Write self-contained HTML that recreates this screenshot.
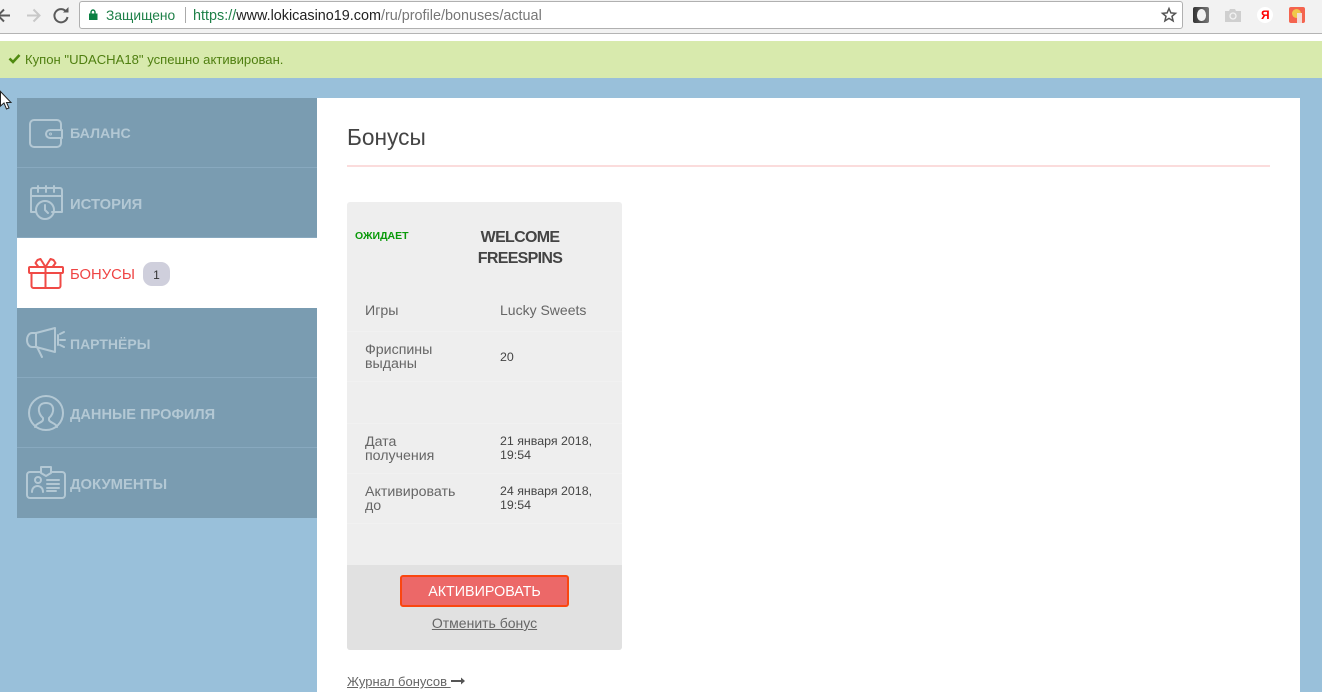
<!DOCTYPE html>
<html lang="ru"><head><meta charset="utf-8"><title>Бонусы</title>
<style>
html,body{margin:0;padding:0}
body{position:relative;width:1322px;height:692px;overflow:hidden;background:#99c0da;font-family:"Liberation Sans","Noto Sans CJK SC",sans-serif;color:#555}
.a{position:absolute;white-space:nowrap}
svg{position:absolute;overflow:visible}
.nav{position:absolute;left:17px;width:300px;height:70px;background:#7a9cb1;border-bottom:1px solid #88a9bf;box-sizing:border-box}
.nl{position:absolute;left:70px;font-size:14.4px;font-weight:bold;color:#b3c8d4;white-space:nowrap}
.i{fill:none;stroke:#b3c8d4;stroke-width:2;stroke-linecap:round;stroke-linejoin:round}
.lab{position:absolute;left:365px;font-size:14.2px;line-height:14px;color:#666;white-space:nowrap}
.val{position:absolute;left:500px;font-size:12.4px;line-height:14px;color:#444;white-space:nowrap}
.ln{position:absolute;left:347px;width:275px;height:1px;background:#f1f1f1}
</style></head><body>
<div class="a" style="left:0;top:0;width:1322px;height:33px;background:#f2f2f2;border-bottom:1px solid #b4b4b4"></div>
<div class="a" style="left:0;top:34px;width:1322px;height:7px;background:#fff"></div>
<svg style="left:0;top:0" width="80" height="32" fill="none">
<path d="M-2 15.5H10M4 9.5L-2 15.5 4 21.5" stroke="#5a5a5a" stroke-width="2"/>
<path d="M27 15.5H39M33.5 9.5L39.5 15.5 33.5 21.5" stroke="#c8c8c8" stroke-width="2"/>
<path d="M66.5 12A6.6 6.6 0 1 0 67.5 17" stroke="#5a5a5a" stroke-width="2"/>
<path d="M63 12.5h5.5V7z" fill="#5a5a5a"/>
</svg>
<div class="a" style="left:79px;top:1px;width:1102px;height:26px;background:#fff;border:1px solid #b0b0b0;border-radius:3px"></div>
<svg style="left:89px;top:9px" width="10" height="12"><path d="M2 5V3.500a2 2.500 0 0 1 4 0V5" fill="none" stroke="#0b8043" stroke-width="1.4"/><rect x="0" y="4.500" width="8.500" height="6.500" fill="#0b8043"/></svg>
<div class="a" style="left:106px;top:8px;font-size:13.8px;line-height:16px;color:#1e8048">Защищено</div>
<div class="a" style="left:185px;top:7px;width:1px;height:16px;background:#aaa"></div>
<div class="a" style="left:193px;top:8px;font-size:14.4px;line-height:16px;color:#777"><span style="color:#1e8048">https://</span><span style="color:#222">www.lokicasino19.com</span>/ru/profile/bonuses/actual</div>
<svg style="left:1161px;top:7px" width="16" height="16"><path d="M8 1.500l1.900 4.400 4.600.4-3.500 3 1.100 4.600L8 11.400l-4.100 2.500L5 9.300l-3.500-3 4.600-.4z" fill="none" stroke="#555" stroke-width="1.500"/></svg>
<div class="a" style="left:1193px;top:7px;width:16px;height:16px;background:linear-gradient(90deg,#333,#777);border-radius:2px"></div>
<div class="a" style="left:1197px;top:9px;width:9px;height:12px;background:#f2f2f2;border-radius:50% 50% 45% 45%"></div>
<svg style="left:1225px;top:8px" width="16" height="14"><path d="M0 3h4l1-2h5l1 2h5v11H0z" fill="#cfcfcf"/><circle cx="8" cy="8" r="3" fill="none" stroke="#f2f2f2" stroke-width="1.300"/></svg>
<div class="a" style="left:1257px;top:7px;width:16px;height:16px;border-radius:50%;background:#fff"></div>
<div class="a" style="left:1261px;top:8px;font-size:12px;line-height:14px;font-weight:bold;color:#f00">Я</div>
<div class="a" style="left:1289px;top:7px;width:16px;height:16px;background:#f4644f;border-radius:2px"></div>
<div class="a" style="left:1292px;top:9px;width:9px;height:9px;background:#f0c84a;border-radius:50%"></div>
<div class="a" style="left:1297px;top:13px;width:5px;height:10px;background:#f3dcd8"></div>

<div class="a" style="left:0;top:41px;width:1322px;height:37px;background:#d8eaad"></div>
<svg style="left:8px;top:53px" width="13" height="11"><path d="M1.500 5.500L5 9 11.500 2" fill="none" stroke="#4f8a10" stroke-width="2.600"/></svg>
<div class="a" style="left:25px;top:52px;font-size:13.1px;line-height:16px;color:#4f7f10">Купон "UDACHA18" успешно активирован.</div>

<svg style="left:0;top:91px" width="13" height="20"><path d="M.5.5V15l3.500-3 2.500 6 2.500-1-2.500-5.500H11z" fill="#fff" stroke="#222"/></svg>

<div class="a" style="left:317px;top:98px;width:983px;height:594px;background:#fff"></div>

<div class="nav" style="top:98px"></div>
<div class="nav" style="top:168px"></div>
<div class="nav" style="top:238px;background:#fff;border:0"></div>
<div class="nav" style="top:308px"></div>
<div class="nav" style="top:378px"></div>
<div class="nav" style="top:448px;border-bottom-color:#7a9cb1"></div>

<div class="nl" style="top:125px;line-height:18px;font-size:14.2px">БАЛАНС</div>
<div class="nl" style="top:196px;line-height:18px;font-size:14.8px">ИСТОРИЯ</div>
<div class="nl" style="top:266px;line-height:18px;color:#ef4444;font-weight:normal;font-size:14.8px">БОНУСЫ</div>
<div class="a" style="left:143px;top:262px;width:27px;height:24px;border-radius:9px;background:#cfcfdc"></div>
<div class="a" style="left:143px;top:268px;width:27px;text-align:center;font-size:12px;line-height:14px;color:#333">1</div>
<div class="nl" style="top:335px;line-height:18px;font-size:14px">ПАРТНЁРЫ</div>
<div class="nl" style="top:406px;line-height:18px;font-size:14.6px">ДАННЫЕ ПРОФИЛЯ</div>
<div class="nl" style="top:476px;line-height:18px;font-size:14.8px">ДОКУМЕНТЫ</div>

<svg class="i" style="left:0;top:0" width="80" height="520">
<path d="M61 129v-5a4 4 0 0 0-4-4H34a4 4 0 0 0-4 4v19a4 4 0 0 0 4 4h23a4 4 0 0 0 4-4v-5"/>
<path d="M62 130H50a4 4 0 0 0 0 8h12z"/>
<circle cx="50.500" cy="134" r=".5"/>
<path d="M52 212h10V190a2 2 0 0 0-2-2H33a2 2 0 0 0-2 2v22h5M31 196h31M38 186v6M46 186v6M54 186v6"/>
<circle cx="45" cy="210" r="9"/><path d="M45 205v5l3 3"/>
<path d="M36 333l19-5v24l-19-5h-4a5 7 0 0 1 0-14zM36 333v14M37 347l5 10M58 335v10M60 334l4-2M60 340h5M60 345l4 2"/>
<circle cx="46" cy="413" r="17"/>
<path d="M35 427c1-4 7-4 8-7v-2c-6-5-6-15 3-15s9 10 3 15v2c1 3 7 3 8 7"/>
<path d="M41 472H30a3 3 0 0 0-3 3v20a3 3 0 0 0 3 3h32a3 3 0 0 0 3-3v-20a3 3 0 0 0-3-3H51M41 467h10v6l-5 3-5-3z"/>
<circle cx="38" cy="480" r="3"/><path d="M32 492c0-8 11-8 11 0M47 480h12M47 484h12M47 488h12M47 491h9"/>
</svg>
<svg style="left:0;top:0" width="80" height="300" fill="none" stroke="#f04a46" stroke-width="2" stroke-linejoin="round" stroke-linecap="round">
<rect x="29" y="267" width="34" height="6" rx="1"/>
<path d="M31.500 273v13a2 2 0 0 0 2 2h25a2 2 0 0 0 2-2v-13M45.500 267v21M45.500 267l-5-8-3 1-2 3 3 4M45.500 267l5-8 3 1 2 3-3 4"/>
</svg>

<div class="a" style="left:347px;top:123px;font-size:22.7px;line-height:28px;color:#444">Бонусы</div>
<div class="a" style="left:347px;top:165px;width:923px;height:2px;background:#fbdcdc"></div>

<div class="a" style="left:347px;top:202px;width:275px;height:448px;background:#eee;border-radius:3px"></div>
<div class="a" style="left:347px;top:565px;width:275px;height:85px;background:#e1e1e1;border-radius:0 0 3px 3px"></div>
<div class="a" style="left:355px;top:230px;font-size:10.5px;line-height:13px;font-weight:bold;color:#0a9a0a">ОЖИДАЕТ</div>
<div class="a" style="left:418px;top:227px;width:204px;text-align:center;font-size:16px;line-height:21px;font-weight:bold;color:#444;white-space:normal;letter-spacing:-.7px">WELCOME<br>FREESPINS</div>
<div class="ln" style="top:331px"></div><div class="ln" style="top:381px"></div><div class="ln" style="top:423px"></div><div class="ln" style="top:473px"></div><div class="ln" style="top:523px"></div>
<div class="lab" style="top:304px">Игры</div>
<div class="val" style="top:303px;font-size:14px;color:#666">Lucky Sweets</div>
<div class="lab" style="top:343px">Фриспины<br>выданы</div>
<div class="val" style="top:350px">20</div>
<div class="lab" style="top:435px">Дата<br>получения</div>
<div class="val" style="top:434px">21 января 2018,<br>19:54</div>
<div class="lab" style="top:485px">Активировать<br>до</div>
<div class="val" style="top:484px">24 января 2018,<br>19:54</div>
<div class="a" style="left:400px;top:575px;width:169px;height:32px;box-sizing:border-box;background:#ec6868;border:2px solid #fa4610;border-radius:3px;text-align:center;color:#fff;font-size:14.3px;line-height:30px">АКТИВИРОВАТЬ</div>
<div class="a" style="left:347px;top:615px;width:275px;text-align:center;font-size:14px;line-height:16px;color:#666;text-decoration:underline">Отменить бонус</div>
<div class="a" style="left:347px;top:674px;font-size:13px;line-height:16px;color:#666;text-decoration:underline">Журнал бонусов&nbsp;</div>
<svg style="left:451px;top:676px" width="14" height="10"><path d="M0 5h11" stroke="#555" stroke-width="2"/><path d="M10 1.500l4 3.500-4 3.500z" fill="#555"/></svg>
</body></html>
